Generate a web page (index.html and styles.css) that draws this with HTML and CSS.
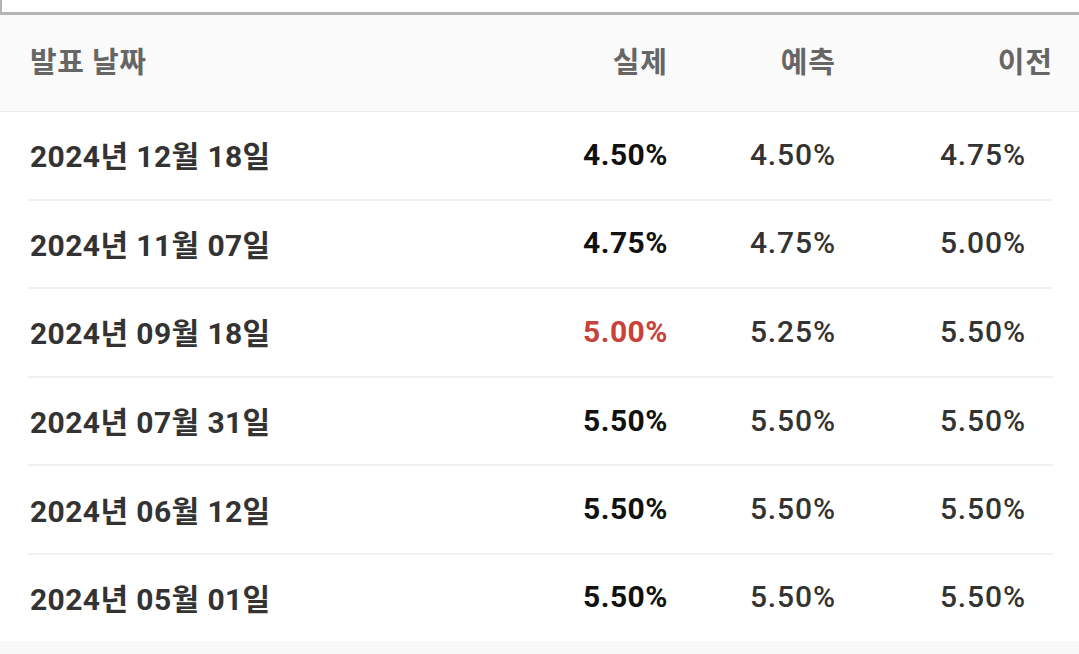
FILE: index.html
```html
<!DOCTYPE html>
<html lang="ko">
<head>
<meta charset="utf-8">
<link rel="stylesheet" href="styles.css">
</head>
<body>
<div class="topbar"><div class="topbox"></div></div>
<div class="table">
  <div class="head">
    <div class="row hrow">
      <div class="c date">발표 날짜</div>
      <div class="c num">실제</div>
      <div class="c num">예측</div>
      <div class="c num last">이전</div>
    </div>
  </div>
  <div class="body">
    <div class="row">
      <div class="c date">2024년 12월 18일</div>
      <div class="c num act">4.50%</div>
      <div class="c num">4.50%</div>
      <div class="c num prev">4.75%</div>
    </div>
    <div class="row">
      <div class="c date">2024년 11월 07일</div>
      <div class="c num act">4.75%</div>
      <div class="c num">4.75%</div>
      <div class="c num prev">5.00%</div>
    </div>
    <div class="row">
      <div class="c date">2024년 09월 18일</div>
      <div class="c num act red">5.00%</div>
      <div class="c num">5.25%</div>
      <div class="c num prev">5.50%</div>
    </div>
    <div class="row">
      <div class="c date">2024년 07월 31일</div>
      <div class="c num act">5.50%</div>
      <div class="c num">5.50%</div>
      <div class="c num prev">5.50%</div>
    </div>
    <div class="row">
      <div class="c date">2024년 06월 12일</div>
      <div class="c num act">5.50%</div>
      <div class="c num">5.50%</div>
      <div class="c num prev">5.50%</div>
    </div>
    <div class="row nob">
      <div class="c date">2024년 05월 01일</div>
      <div class="c num act">5.50%</div>
      <div class="c num">5.50%</div>
      <div class="c num prev">5.50%</div>
    </div>
  </div>
  <div class="foot"></div>
</div>
</body>
</html>
```

FILE: styles.css
```css
* { box-sizing: border-box; }
html, body { margin: 0; padding: 0; }
body {
  width: 1079px;
  height: 654px;
  overflow: hidden;
  background: #ffffff;
  font-family: Roboto, "Noto Sans CJK KR", sans-serif;
}
.topbar {
  height: 15px;
  background: #ffffff;
  border-bottom: 3px solid #b4b4b4;
}
.topbox {
  height: 12px;
  width: 2px;
  background: #b4b4b4;
}
.head {
  background: #fafafa;
  border-bottom: 1px solid #ececec;
}
.row {
  display: grid;
  grid-template-columns: 470px 168px 168px 217px;
  align-items: center;
  margin: 0 26px 0 28px;
  padding: 0 0 2px 2px;
  height: 88.6px;
  border-bottom: 2px solid #f1f1f1;
}
.hrow {
  height: 96px;
  border-bottom: none;
  padding-bottom: 6px;
}
.nob { border-bottom: none; height: 86px; }
.c {
  font-size: 30px;
  font-weight: 700;
  color: #333333;
  white-space: nowrap;
}
.hrow .c {
  font-size: 29px;
  color: #666666;
  letter-spacing: 0.5px;
}
.num { text-align: right; }
.hrow .num { letter-spacing: 1px; }
.hrow .last { padding-right: 0; }
.body .num { font-weight: 500; letter-spacing: 0.9px; }
.body .act { font-weight: 700; color: #111111; letter-spacing: 0.5px; }
.body .red { color: #c8423b; }
.body .prev { padding-right: 27px; }
.body .date { letter-spacing: 0.4px; }
.foot {
  height: 14px;
  background: #f8f8f8;
}
```
